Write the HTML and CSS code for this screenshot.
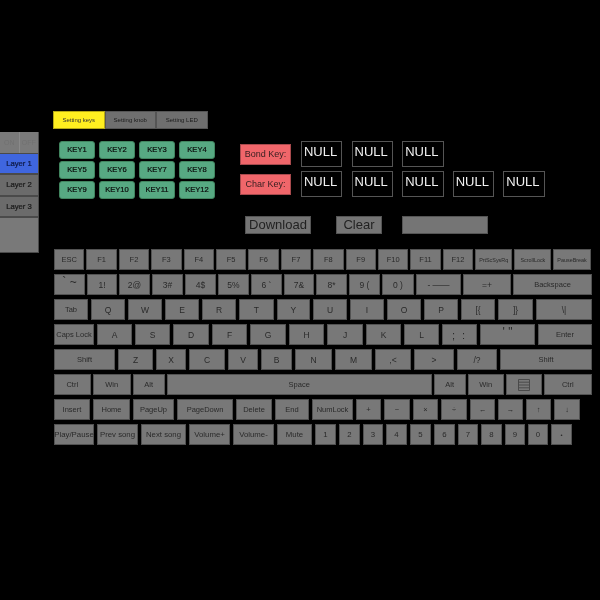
FILE: index.html
```html
<!DOCTYPE html>
<html lang="en">
<head>
  <meta charset="UTF-8">
  <title>Keyboard setting</title>
  <link rel="stylesheet" href="styles.css">
</head>
<body>

<div class="page">
  <div class="sidebar">
    <div class="switch"><span>ON</span><span>OFF</span></div>
    <div class="layer active">Layer 1</div>
    <div class="layer">Layer 2</div>
    <div class="layer">Layer 3</div>
    <div class="layer blank"></div>
  </div>

  <div class="main">
    <div class="tabs">
      <div class="tab selected">Setting keys</div>
      <div class="tab">Setting knob</div>
      <div class="tab">Setting LED</div>
    </div>

    <div class="panel">
      <div class="pad">
        <div class="padkey">KEY1</div>
        <div class="padkey">KEY2</div>
        <div class="padkey">KEY3</div>
        <div class="padkey">KEY4</div>
        <div class="padkey">KEY5</div>
        <div class="padkey">KEY6</div>
        <div class="padkey">KEY7</div>
        <div class="padkey">KEY8</div>
        <div class="padkey">KEY9</div>
        <div class="padkey">KEY10</div>
        <div class="padkey">KEY11</div>
        <div class="padkey">KEY12</div>
      </div>

      <div class="binds">
        <div class="bind">
          <div class="bindname">Bond Key:</div>
          <div class="slot">NULL</div>
          <div class="slot">NULL</div>
          <div class="slot">NULL</div>
        </div>
        <div class="bind">
          <div class="bindname">Char Key:</div>
          <div class="slot">NULL</div>
          <div class="slot">NULL</div>
          <div class="slot">NULL</div>
          <div class="slot">NULL</div>
          <div class="slot">NULL</div>
        </div>
      </div>
    </div>

    <div class="actions">
      <div class="action download">Download</div>
      <div class="action clear">Clear</div>
      <div class="action status"></div>
    </div>

    <div class="keyboard">
      <div class="row row1">
        <div class="key">ESC</div>
        <div class="key">F1</div>
        <div class="key">F2</div>
        <div class="key">F3</div>
        <div class="key">F4</div>
        <div class="key">F5</div>
        <div class="key">F6</div>
        <div class="key">F7</div>
        <div class="key">F8</div>
        <div class="key">F9</div>
        <div class="key">F10</div>
        <div class="key">F11</div>
        <div class="key">F12</div>
        <div class="key tiny">PrtScSysRq</div>
        <div class="key tiny">ScrollLock</div>
        <div class="key tiny">PauseBreak</div>
      </div>
      <div class="row row2">
        <div class="key raised">` ~</div>
        <div class="key">1!</div>
        <div class="key">2@</div>
        <div class="key">3#</div>
        <div class="key">4$</div>
        <div class="key">5%</div>
        <div class="key">6 `</div>
        <div class="key">7&amp;</div>
        <div class="key">8*</div>
        <div class="key">9 (</div>
        <div class="key">0 )</div>
        <div class="key">- ——</div>
        <div class="key">=+</div>
        <div class="key label">Backspace</div>
      </div>
      <div class="row row3">
        <div class="key label">Tab</div>
        <div class="key">Q</div>
        <div class="key">W</div>
        <div class="key">E</div>
        <div class="key">R</div>
        <div class="key">T</div>
        <div class="key">Y</div>
        <div class="key">U</div>
        <div class="key">I</div>
        <div class="key">O</div>
        <div class="key">P</div>
        <div class="key">[{</div>
        <div class="key">]}</div>
        <div class="key">\|</div>
      </div>
      <div class="row row4">
        <div class="key label">Caps Lock</div>
        <div class="key">A</div>
        <div class="key">S</div>
        <div class="key">D</div>
        <div class="key">F</div>
        <div class="key">G</div>
        <div class="key">H</div>
        <div class="key">J</div>
        <div class="key">K</div>
        <div class="key">L</div>
        <div class="key big">; :</div>
        <div class="key raised">' "</div>
        <div class="key label">Enter</div>
      </div>
      <div class="row row5">
        <div class="key label">Shift</div>
        <div class="key">Z</div>
        <div class="key">X</div>
        <div class="key">C</div>
        <div class="key">V</div>
        <div class="key">B</div>
        <div class="key">N</div>
        <div class="key">M</div>
        <div class="key">,&lt;</div>
        <div class="key">&gt;</div>
        <div class="key">/?</div>
        <div class="key label">Shift</div>
      </div>
      <div class="row row6">
        <div class="key">Ctrl</div>
        <div class="key">Win</div>
        <div class="key">Alt</div>
        <div class="key">Space</div>
        <div class="key">Alt</div>
        <div class="key">Win</div>
        <div class="key">
          <svg class="menuicon" width="12" height="12" viewBox="0 0 12 12">
            <path d="M.5.5h11v11H.5zM.5 3.2h11M.5 6h11M.5 8.8h11" fill="none" stroke="#4a4a4a"/>
          </svg>
        </div>
        <div class="key">Ctrl</div>
      </div>
      <div class="row row7">
        <div class="key">Insert</div>
        <div class="key">Home</div>
        <div class="key">PageUp</div>
        <div class="key">PageDown</div>
        <div class="key">Delete</div>
        <div class="key">End</div>
        <div class="key">NumLock</div>
        <div class="key">+</div>
        <div class="key">−</div>
        <div class="key">×</div>
        <div class="key">÷</div>
        <div class="key">←</div>
        <div class="key">→</div>
        <div class="key">↑</div>
        <div class="key">↓</div>
      </div>
      <div class="row row8">
        <div class="key">Play/Pause</div>
        <div class="key">Prev song</div>
        <div class="key">Next song</div>
        <div class="key">Volume+</div>
        <div class="key">Volume-</div>
        <div class="key">Mute</div>
        <div class="key">1</div>
        <div class="key">2</div>
        <div class="key">3</div>
        <div class="key">4</div>
        <div class="key">5</div>
        <div class="key">6</div>
        <div class="key">7</div>
        <div class="key">8</div>
        <div class="key">9</div>
        <div class="key">0</div>
        <div class="key dot">•</div>
      </div>
    </div>
  </div>
</div>

</body>
</html>
```

FILE: styles.css
```css
html, body { margin: 0; height: 100%; background-color: #000; overflow: hidden; }
body { font-family: "Liberation Sans", Arial, sans-serif; color: #333; }
* { box-sizing: border-box; }

.page { display: grid; grid-template-columns: 39px 1fr; padding-top: 111px; filter: blur(0.35px); }

.sidebar { margin-top: 21px; }
.switch { display: flex; height: 21px; border-right: 1px solid #4d4d4d; }
.switch span { flex: 1; background-color: #7a7a7a; color: #717171; font-size: 7px; line-height: 21px; text-align: center; border-right: 1px solid #8a8a8a; }
.switch span:last-child { border-right: none; }
.layer { height: 21.3px; line-height: 20px; font-size: 7.7px; text-align: center; background-color: #6b6b6b; border: 1px solid #4a4a4a; border-left: none; color: #181818; -webkit-text-stroke: 0.2px; }
.layer.active { background-color: #3f66df; color: #0c1740; }
.layer.blank { height: 36px; background-color: #797979; }

.main { padding-left: 14px; }

.tabs { display: flex; height: 18px; }
.tab { width: 51.5px; font-size: 6px; line-height: 16px; text-align: center; background-color: #6f6f6f; border: 1px solid #555; color: #1c1c1c; }
.tab.selected { background-color: #ffef20; border-color: #b5a915; color: #333; }

.panel { display: flex; margin-top: 12px; }
.pad { display: grid; grid-template-columns: repeat(4, 36px); grid-auto-rows: 18px; column-gap: 4px; row-gap: 2.2px; margin-left: 6px; }
.padkey { font-size: 7.6px; line-height: 16px; text-align: center; color: #0a0a0a; background-color: #57a982; border: 1px solid #41855f; border-radius: 3px; -webkit-text-stroke: 0.2px; }

.binds { display: flex; flex-direction: column; gap: 4px; margin-left: 25px; }
.bind { display: flex; align-items: center; gap: 9.2px; }
.bindname { width: 51px; height: 21px; margin-right: 0.8px; font-size: 9px; line-height: 19px; text-align: center; color: #3a2022; background-color: #f0666a; border: 1px solid #a84a4d; }
.slot { width: 41.4px; height: 26px; padding-left: 2px; font-size: 13px; line-height: 20px; color: #f2f2f2; border: 1px solid #555; }

.actions { display: flex; height: 18px; margin-top: 17px; margin-left: 192px; }
.action { height: 18px; font-size: 13px; line-height: 16px; text-align: center; background-color: #757575; border: 1px solid #555; color: #222; }
.download { width: 66px; }
.clear { width: 46px; margin-left: 25px; }
.status { width: 86px; margin-left: 20px; }

.keyboard { display: flex; flex-direction: column; gap: 4px; margin-top: 15px; margin-left: 1px; }
.row { display: grid; height: 21px; column-gap: 3px; }
.row1 { column-gap: 2px; grid-template-columns: repeat(13, 30.4px) repeat(3, 37.2px); }
.row2 { column-gap: 2px; grid-template-columns: 31px 30px 31px 31px 31px 31px 31px 30px 31px 31px 32px 45px 48px 79px; }
.row3 { grid-template-columns: 34px 34px 34px 34px 34px 34.5px 33.5px 34px 34px 34px 34px 34px 35px 56px; }
.row4 { grid-template-columns: 40px 35px 35px 36px 35px 36px 35px 36px 35px 35px 35px 55px 54px; }
.row5 { grid-template-columns: 61px 35px 30px 36px 30px 31px 37px 37px 36px 40px 40px 92px; }
.row6 { column-gap: 2.5px; grid-template-columns: 36.5px 37.5px 31.5px 264.5px 31.5px 35.5px 35.5px 47.5px; }
.row7 { grid-template-columns: 36px 37px 41px 56px 36px 34px 41px 25px 26px 25px 26px 25px 25px 25px 26px; }
.row8 { grid-template-columns: 40px 41px 45px 41px 41px 35px 21px 21px 20px 21px 21px 21px 20px 21px 20px 20px 21px; }

.key { display: flex; align-items: center; justify-content: center; font-size: 7.5px; white-space: nowrap; background-color: #787878; border: 1px solid #525252; color: #2a2a2a; }
.row2 .key, .row3 .key, .row4 .key, .row5 .key { font-size: 8.5px; }
.row8 .key { font-size: 7.8px; }
.row .key.label { font-size: 7.5px; }
.key.tiny { font-size: 5.4px; }
.row .key.big { font-size: 11px; letter-spacing: 2px; }
.row .key.raised { align-items: flex-start; padding-top: 3px; font-size: 12px; line-height: 9px; }
.row .key.dot { font-size: 6px; }
.menuicon { display: block; }
```
